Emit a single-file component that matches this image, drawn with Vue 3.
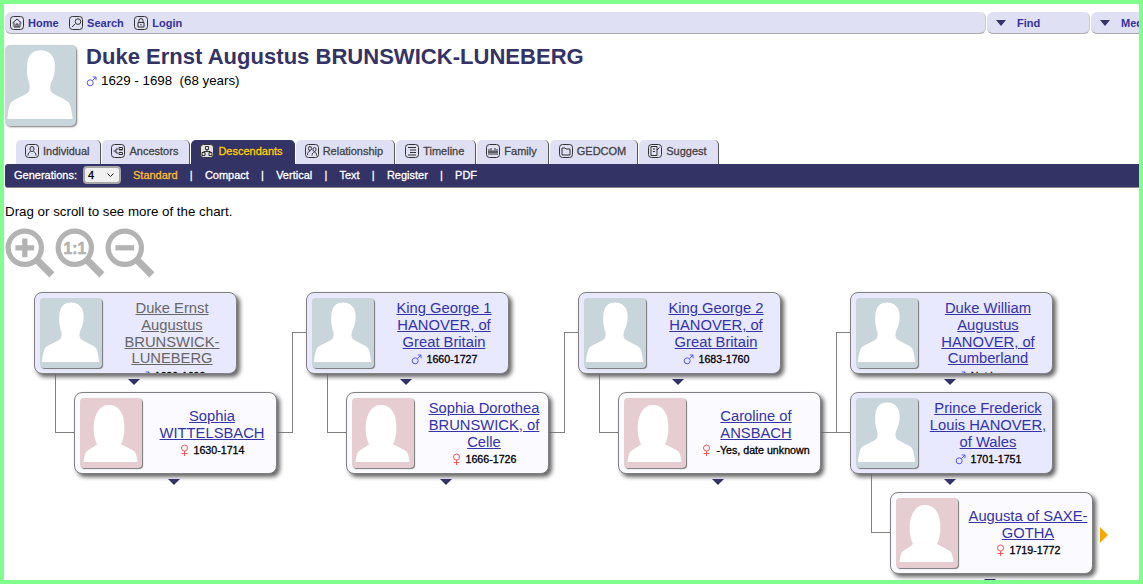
<template>
  <div class="frame">
    <nav class="topnav">
      <div class="menu-main">
        <a v-for="item in navItems" :key="item.label" class="nav-link">
          <svg class="ico" viewBox="0 0 14 14"><rect x="0.5" y="0.5" width="13" height="13" rx="3" /><path :d="item.icon" /></svg>
          {{ item.label }}
        </a>
      </div>
      <div class="menu-drop find"><span class="caret"></span>Find</div>
      <div class="menu-drop media"><span class="caret"></span>Media</div>
    </nav>

    <header class="person">
      <div class="person-photo">
        <svg viewBox="0 0 62 70" preserveAspectRatio="none"><path :d="maleShape" fill="#fff" /></svg>
      </div>
      <div class="person-info">
        <h1>Duke Ernst Augustus BRUNSWICK-LUNEBERG</h1>
        <div class="person-dates">
          <svg class="sex" viewBox="0 0 11 11"><circle cx="4.2" cy="6.8" r="3" stroke="#5555ff" /><path d="M6.5 4.5 L10 1 M6.8 1 H10 V4.2" stroke="#5555ff" /></svg>
          <span>1629 - 1698&nbsp; (68 years)</span>
        </div>
      </div>
    </header>

    <ul class="tabs">
      <li v-for="tab in tabs" :key="tab.label" class="tab" :class="{ active: tab.active }">
        <svg class="ico" viewBox="0 0 14 14"><rect x="0.5" y="0.5" width="13" height="13" rx="3" /><path :d="tab.icon" /></svg>
        {{ tab.label }}
      </li>
    </ul>
    <div class="subbar">
      <span class="gen-label">Generations:</span>
      <span class="gen-wrap">
        <select class="gen-select"><option>4</option></select>
        <svg class="gen-arrow" viewBox="0 0 7 4"><path d="M0.5 0.5 L3.5 3.5 L6.5 0.5" /></svg>
      </span>
      <template v-for="(opt, i) in chartTypes" :key="opt">
        <span class="sep" v-if="i > 0">|</span>
        <a class="sub-link" :class="{ current: i === 0 }">{{ opt }}</a>
      </template>
    </div>

    <p class="hint">Drag or scroll to see more of the chart.</p>

    <div class="zoom-tools">
      <svg v-for="z in zoomTools" :key="z" class="zoom-ico" viewBox="0 0 48 48">
        <circle cx="19" cy="19" r="16" />
        <path class="handle" d="M31 31 L45 45" />
        <path v-if="z === 'in'" class="sign" d="M10 19 H28 M19 10 V28" />
        <path v-if="z === 'out'" class="sign" d="M10 19 H28" />
        <text v-if="z === 'fit'" x="19" y="24.5" text-anchor="middle">1:1</text>
      </svg>
    </div>

    <div class="chart">
      <div v-for="(l, i) in lines" :key="i" class="line" :style="lineStyle(l)"></div>
      <div
        v-for="p in people"
        :key="p.name"
        class="card"
        :class="p.sex"
        :style="{ left: p.x + 'px', top: p.y + 'px' }"
      >
        <div class="card-photo">
          <svg viewBox="0 0 62 70"><path :d="p.sex === 'm' ? maleShape : femaleShape" fill="#fff" /></svg>
        </div>
        <div class="card-text">
          <a class="card-name" :class="{ root: p.root }">{{ p.name }}</a>
          <div class="card-dates">
            <svg v-if="p.sex === 'm'" class="sex" viewBox="0 0 11 11"><circle cx="4.2" cy="6.8" r="3" stroke="#5555ff" /><path d="M6.5 4.5 L10 1 M6.8 1 H10 V4.2" stroke="#5555ff" /></svg>
            <svg v-else class="sex female" viewBox="0 0 9 12"><circle cx="4.5" cy="4" r="3" stroke="#ff5555" /><path d="M4.5 7 V12 M1.5 9.5 H7.5" stroke="#ff5555" /></svg>
            {{ p.dates }}
          </div>
        </div>
      </div>
      <span v-for="p in people" :key="'t' + p.name" class="down" :style="{ left: p.x + 94 + 'px', top: p.y + 87 + 'px' }"></span>
      <span class="more"></span>
    </div>
  </div>
</template>

<script setup>
const maleShape =
  'M31 4.5 C38 4.5 43 9 43.5 16 C44 22 43 27 41 31 C39.5 34 39 37 40 40 C43 44 52 46 56 50 C58 54 58.5 59 59 64 L2 64 C2.5 59 3 54 5 50 C9 46 18 44 21 40 C22 37 21.5 34 20.5 31 C19 27 19 22 19.5 16 C20 9 24 4.5 31 4.5 Z'
const femaleShape =
  'M29 7 C37 7 43 13 44 24 C45 32 44 40 41 46 C45 49 52 51 55 54 C56.5 57 57 60 57.5 64 L3.5 64 C4 60 4.5 57 6 54 C9 51 15 49 17 46 C14 40 13 32 14 24 C16 13 21 7 29 7 Z'

const navItems = [
  { label: 'Home', icon: 'M2.5 7 L7 3 L11.5 7 M4 6.5 V11 H10 V6.5 M6 11 V8 H8 V11' },
  { label: 'Search', icon: 'M3 11 L6 8 M9 2.8 A2.8 2.8 0 1 0 9 8.4 A2.8 2.8 0 1 0 9 2.8' },
  { label: 'Login', icon: 'M4 6.5 H10 V11 H4 Z M5 6.5 V4.5 A2 2 0 0 1 9 4.5 V6.5 M7 8 V9.5' }
]

const tabs = [
  { label: 'Individual', icon: 'M7 2.5 A2 2.5 0 1 0 7 7.5 A2 2.5 0 1 0 7 2.5 M3 11.5 C3 9 4.5 8 5.5 7.5 M11 11.5 C11 9 9.5 8 8.5 7.5' },
  { label: 'Ancestors', icon: 'M2.5 7 H5 M5 5 H7 M5 9 H7 M5 5 V9 M8 3.5 H11.5 V5.5 H8 Z M8 6 H11.5 M8 8.5 H11.5 V10.5 H8 Z' },
  { label: 'Descendants', active: true, icon: 'M5.5 2.5 H8.5 V5.5 H5.5 Z M7 5.5 V7.5 M3.5 7.5 H10.5 M2 8.5 H5 V11.5 H2 Z M9 8.5 H12 V11.5 H9 Z' },
  { label: 'Relationship', icon: 'M5 2.5 A1.6 2 0 1 0 5 6.5 A1.6 2 0 1 0 5 2.5 M9.5 3.5 A1.6 2 0 1 0 9.5 7.5 A1.6 2 0 1 0 9.5 3.5 M2.5 11 C2.5 8.5 3.5 7.5 5 7 M7 11.5 C7 9.5 8 8.5 9.5 8 C11 8.5 11.5 9.5 11.5 11.5' },
  { label: 'Timeline', icon: 'M3 3.5 H11 M5 6 H11 M5 8.5 H11 M3 11 H11' },
  { label: 'Family', icon: 'M2 8 H12 M3 5 V11 M5 4 V11 M7 6 V11 M9 4 V11 M11 5 V11' },
  { label: 'GEDCOM', icon: 'M3 4 H6 L7 5 H11 V11 H3 Z' },
  { label: 'Suggest', icon: 'M3 2.5 H9 V11.5 H3 Z M9 6 L11.5 3.5 M5 5 H7 M5 7.5 H7' }
]

const chartTypes = ['Standard', 'Compact', 'Vertical', 'Text', 'Register', 'PDF']
const zoomTools = ['in', 'fit', 'out']

// chart coordinates, origin at the page's left edge and y = 280
const people = [
  { name: 'Duke Ernst Augustus BRUNSWICK-LUNEBERG', sex: 'm', dates: '1629-1698', x: 30, y: 12, root: true },
  { name: 'Sophia WITTELSBACH', sex: 'f', dates: '1630-1714', x: 70, y: 112 },
  { name: 'King George 1 HANOVER, of Great Britain', sex: 'm', dates: '1660-1727', x: 302, y: 12 },
  { name: 'Sophia Dorothea BRUNSWICK, of Celle', sex: 'f', dates: '1666-1726', x: 342, y: 112 },
  { name: 'King George 2 HANOVER, of Great Britain', sex: 'm', dates: '1683-1760', x: 574, y: 12 },
  { name: 'Caroline of ANSBACH', sex: 'f', dates: '-Yes, date unknown', x: 614, y: 112 },
  { name: 'Duke William Augustus HANOVER, of Cumberland', sex: 'm', dates: 'Not known', x: 846, y: 12 },
  { name: 'Prince Frederick Louis HANOVER, of Wales', sex: 'm', dates: '1701-1751', x: 846, y: 112 },
  { name: 'Augusta of SAXE-GOTHA', sex: 'f', dates: '1719-1772', x: 886, y: 212 }
]

// connector segments: [x, y, width, height]
const lines = [
  [51, 93, 1, 60], [51, 152, 20, 1], [272, 152, 17, 1], [288, 52, 1, 100], [288, 52, 15, 1],
  [323, 93, 1, 60], [323, 152, 20, 1], [544, 152, 17, 1], [560, 52, 1, 100], [560, 52, 15, 1],
  [595, 93, 1, 60], [595, 152, 20, 1], [816, 152, 31, 1], [832, 52, 1, 100], [832, 52, 15, 1],
  [867, 193, 1, 60], [867, 252, 20, 1]
]

const lineStyle = ([x, y, w, h]) => ({
  left: x + 'px',
  top: y + 'px',
  width: w + 'px',
  height: h + 'px'
})
</script>

<style>
html,
body {
  margin: 0;
  background: #fff;
  overflow: hidden;
}
</style>

<style scoped>
.frame {
  box-sizing: border-box;
  width: 1143px;
  height: 584px;
  border: 4px solid #80ff8e;
  overflow: hidden;
  font-family: "Liberation Sans", Arial, sans-serif;
  font-size: 13.33px;
  color: #000;
  display: flex;
  flex-direction: column;
}

.ico {
  width: 14px;
  height: 14px;
  flex: none;
  fill: none;
  stroke: #333;
  stroke-width: 1;
}

.topnav {
  display: flex;
  margin: 8px 0 0 1px;
  height: 22px;
  gap: 1px;
  width: 1200px;
  flex: none;
}

.menu-main,
.menu-drop {
  box-sizing: border-box;
  background: #e0e0f4;
  border-radius: 6px;
  border-bottom: 1px solid #aaa;
  border-right: 1px solid #ccc;
  display: flex;
  align-items: center;
  font-size: 11px;
  font-weight: bold;
  color: #333399;
}

.menu-main {
  width: 981px;
  padding-left: 5px;
  gap: 10.5px;
}

.nav-link {
  display: flex;
  align-items: center;
  gap: 4px;
}

.menu-drop.find {
  width: 103px;
  padding-left: 9px;
}

.menu-drop.media {
  width: 100px;
  padding-left: 9px;
}

.caret {
  width: 0;
  height: 0;
  border: 5.5px solid transparent;
  border-top: 6px solid #333366;
  border-bottom: 0;
  margin-right: 11px;
}

.person {
  display: flex;
  margin: 11px 0 0 1px;
  height: 81px;
  flex: none;
}

.person-photo {
  width: 71px;
  height: 81px;
  background: #c8d6dc;
  border-radius: 5px;
  box-shadow: 1px 1px 2px #777;
}

.person-photo svg {
  width: 100%;
  height: 100%;
  display: block;
}

.person-info {
  margin-left: 10px;
}

.person-info h1 {
  margin: 0;
  font-size: 22.05px;
  line-height: 24px;
  font-weight: bold;
  color: #333366;
}

.person-dates {
  display: flex;
  align-items: center;
  gap: 4px;
  margin-top: 4px;
  line-height: 16px;
}

.sex {
  width: 11px;
  height: 11px;
  fill: none;
  stroke-width: 1;
  flex: none;
}

.sex.female {
  width: 9px;
  height: 12px;
}

.tabs {
  list-style: none;
  display: flex;
  gap: 1px;
  margin: 14px 0 0 12px;
  padding: 0;
  height: 24px;
  flex: none;
}

.tab {
  box-sizing: border-box;
  display: flex;
  align-items: center;
  gap: 4px;
  height: 24px;
  padding: 0 11px 2px 9px;
  background: #e0e0f4;
  border-radius: 5px 5px 0 0;
  border-right: 1px solid #555;
  font-size: 11px;
  color: #444;
  -webkit-text-stroke: 0.3px #444;
}

.tab.active {
  background: #333366;
  color: #ffcc00;
  border-right-color: #333366;
  -webkit-text-stroke: 0.3px #ffcc00;
}

.tab.active .ico rect {
  fill: #e0e0e0;
}

.subbar {
  box-sizing: border-box;
  display: flex;
  align-items: center;
  height: 24px;
  margin-left: 1px;
  flex: none;
  padding: 0 0 1px 9px;
  background: #333366;
  border-bottom: 1px solid #888;
  border-radius: 3px 0 0 3px;
  font-size: 11px;
  color: #fff;
  -webkit-text-stroke: 0.3px #fff;
}

.gen-wrap {
  position: relative;
  margin: 0 12px 0 6px;
  display: flex;
}

.gen-select {
  box-sizing: border-box;
  width: 38px;
  height: 18px;
  padding: 0 0 0 3px;
  appearance: none;
  font: 11px "Liberation Sans", Arial, sans-serif;
  color: #000;
  -webkit-text-stroke: 0.3px #000;
  background: #f0f0f0;
  border: 2px solid #a8a8a8;
  border-radius: 4px;
}

.gen-arrow {
  position: absolute;
  left: 24px;
  top: 7px;
  width: 7px;
  height: 4px;
  fill: none;
  stroke: #222;
  stroke-width: 1;
}

.sep {
  margin: 0 12.2px;
  color: #fff;
}

.sub-link.current {
  color: #ffbb33;
  -webkit-text-stroke: 0.3px #ffbb33;
}

.hint {
  margin: 17px 0 0 1px;
  line-height: 14px;
  flex: none;
}

.zoom-tools {
  display: flex;
  margin: 9px 0 0 1px;
  height: 52px;
  flex: none;
}

.zoom-ico {
  width: 50px;
  height: 50px;
  fill: none;
  stroke: #b3b3b3;
  stroke-width: 5;
}

.zoom-ico .handle {
  stroke-width: 7;
}

.zoom-ico .sign {
  stroke-width: 5;
}

.zoom-ico text {
  fill: #b3b3b3;
  stroke: #b3b3b3;
  stroke-width: 0.6;
  font: bold 15px "Liberation Sans", Arial, sans-serif;
}

.chart {
  position: relative;
  flex: 1;
  min-height: 0;
}

.line {
  position: absolute;
  background: #808080;
}

.card {
  position: absolute;
  box-sizing: border-box;
  width: 203px;
  height: 82px;
  display: flex;
  border: 1px solid #808080;
  border-radius: 8px;
  box-shadow: 3px 3px 4px #666;
  overflow: hidden;
}

.card.m {
  background: #e8e8ff;
}

.card.f {
  background: #fafaff;
}

.card-photo {
  width: 62px;
  height: 70px;
  margin: 5px 0 0 5px;
  flex: none;
  border-radius: 4px;
  box-shadow: 1px 1px 1px #777;
}

.card.m .card-photo {
  background: #c8d6dc;
}

.card.f .card-photo {
  background: #e6cdd2;
}

.card-photo svg {
  display: block;
  width: 100%;
  height: 100%;
}

.card-text {
  box-sizing: border-box;
  flex: 1;
  min-width: 0;
  height: 80px;
  padding: 7px 2px 6px 8px;
  display: flex;
  flex-direction: column;
  justify-content: safe center;
  align-items: center;
  text-align: center;
}

.card-name {
  font-size: 14.75px;
  line-height: 16.8px;
  color: #3333aa;
  text-decoration: underline;
}

.card-name.root {
  color: #666;
}

.card-dates {
  display: flex;
  align-items: center;
  gap: 5px;
  height: 18px;
  flex: none;
  font-size: 10.67px;
  white-space: nowrap;
  -webkit-text-stroke: 0.3px #000;
}

.down {
  position: absolute;
  width: 0;
  height: 0;
  border-left: 6px solid transparent;
  border-right: 6px solid transparent;
  border-top: 6px solid #333366;
}

.more {
  position: absolute;
  left: 1096px;
  top: 247px;
  width: 0;
  height: 0;
  border-top: 8px solid transparent;
  border-bottom: 8px solid transparent;
  border-left: 8px solid #f5a800;
}
</style>
